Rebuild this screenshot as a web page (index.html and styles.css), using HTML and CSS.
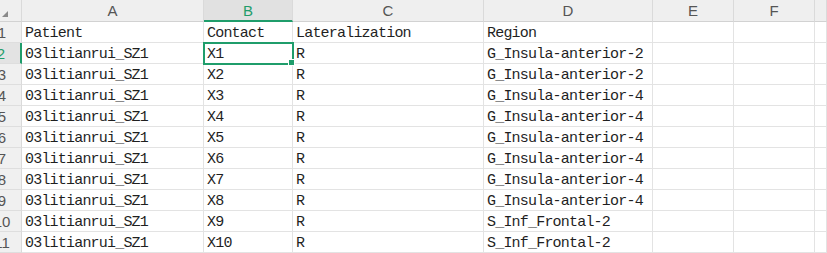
FILE: index.html
```html
<!DOCTYPE html>
<html lang="en">
<head>
  <meta charset="UTF-8">
  <title>Sheet1</title>
  <link rel="stylesheet" href="styles.css">
</head>
<body>
  <div class="sheet">
    <div class="corner"><span class="corner-mark"></span></div>
    <div class="col-head">A</div>
    <div class="col-head selected">B</div>
    <div class="col-head">C</div>
    <div class="col-head">D</div>
    <div class="col-head">E</div>
    <div class="col-head">F</div>
    <div class="col-head"></div>

    <div class="row-head"><span>1</span></div>
    <div class="cell">Patient</div><div class="cell">Contact</div><div class="cell">Lateralization</div><div class="cell">Region</div><div class="cell"></div><div class="cell"></div><div class="cell"></div>

    <div class="row-head selected"><span>2</span></div>
    <div class="cell">03litianrui_SZ1</div><div class="cell active">X1<span class="handle"></span></div><div class="cell">R</div><div class="cell">G_Insula-anterior-2</div><div class="cell"></div><div class="cell"></div><div class="cell"></div>

    <div class="row-head"><span>3</span></div>
    <div class="cell">03litianrui_SZ1</div><div class="cell">X2</div><div class="cell">R</div><div class="cell">G_Insula-anterior-2</div><div class="cell"></div><div class="cell"></div><div class="cell"></div>

    <div class="row-head"><span>4</span></div>
    <div class="cell">03litianrui_SZ1</div><div class="cell">X3</div><div class="cell">R</div><div class="cell">G_Insula-anterior-4</div><div class="cell"></div><div class="cell"></div><div class="cell"></div>

    <div class="row-head"><span>5</span></div>
    <div class="cell">03litianrui_SZ1</div><div class="cell">X4</div><div class="cell">R</div><div class="cell">G_Insula-anterior-4</div><div class="cell"></div><div class="cell"></div><div class="cell"></div>

    <div class="row-head"><span>6</span></div>
    <div class="cell">03litianrui_SZ1</div><div class="cell">X5</div><div class="cell">R</div><div class="cell">G_Insula-anterior-4</div><div class="cell"></div><div class="cell"></div><div class="cell"></div>

    <div class="row-head"><span>7</span></div>
    <div class="cell">03litianrui_SZ1</div><div class="cell">X6</div><div class="cell">R</div><div class="cell">G_Insula-anterior-4</div><div class="cell"></div><div class="cell"></div><div class="cell"></div>

    <div class="row-head"><span>8</span></div>
    <div class="cell">03litianrui_SZ1</div><div class="cell">X7</div><div class="cell">R</div><div class="cell">G_Insula-anterior-4</div><div class="cell"></div><div class="cell"></div><div class="cell"></div>

    <div class="row-head"><span>9</span></div>
    <div class="cell">03litianrui_SZ1</div><div class="cell">X8</div><div class="cell">R</div><div class="cell">G_Insula-anterior-4</div><div class="cell"></div><div class="cell"></div><div class="cell"></div>

    <div class="row-head"><span>10</span></div>
    <div class="cell">03litianrui_SZ1</div><div class="cell">X9</div><div class="cell">R</div><div class="cell">S_Inf_Frontal-2</div><div class="cell"></div><div class="cell"></div><div class="cell"></div>

    <div class="row-head"><span>11</span></div>
    <div class="cell">03litianrui_SZ1</div><div class="cell">X10</div><div class="cell">R</div><div class="cell">S_Inf_Frontal-2</div><div class="cell"></div><div class="cell"></div><div class="cell"></div>
  </div>
</body>
</html>
```

FILE: styles.css
```css
body {
  margin: 0;
  background-color: #ffffff;
  overflow: hidden;
}

.sheet {
  display: grid;
  grid-template-columns: 22px 182px 89px 191px 169px 81px 81px 1fr;
  grid-template-rows: 22px;
  grid-auto-rows: 21px;
  font-family: "Liberation Mono", "DejaVu Sans Mono", monospace;
  font-size: 15px;
  letter-spacing: -0.8px;
  color: #1f1f1f;
}

.corner {
  background-color: #efefef;
  border-right: 1px solid #dadada;
  border-bottom: 1px solid #d2d2d2;
  position: relative;
}

.corner-mark {
  position: absolute;
  left: 2px;
  bottom: 4px;
  width: 0;
  height: 0;
  border-left: 6px solid transparent;
  border-bottom: 6px solid #8a8a8a;
}

.col-head {
  box-sizing: border-box;
  display: flex;
  align-items: center;
  justify-content: center;
  background-color: #efefef;
  border-right: 1px solid #dadada;
  border-bottom: 1px solid #d2d2d2;
  font-family: "Liberation Sans", Arial, sans-serif;
  font-size: 15px;
  letter-spacing: 0;
  color: #555555;
}

.col-head.selected {
  background-color: #e1e1e1;
  border-bottom: 2px solid #1f9d6b;
  color: #1f9d6b;
}

.row-head {
  box-sizing: border-box;
  display: flex;
  justify-content: flex-end;
  align-items: center;
  overflow: hidden;
  background-color: #f0f0f0;
  border-right: 1px solid #dadada;
  border-bottom: 1px solid #dedede;
  font-family: "Liberation Sans", Arial, sans-serif;
  font-size: 15px;
  letter-spacing: 0;
  color: #555555;
}

.row-head span {
  flex-shrink: 0;
  width: 38px;
  text-align: center;
}

.row-head.selected {
  background-color: #e3e3e3;
  border-right: 2px solid #1f9d6b;
  color: #1f9d6b;
}

.cell {
  box-sizing: border-box;
  padding: 2px 3px 0;
  line-height: 19px;
  white-space: nowrap;
  border-right: 1px solid #e3e3e3;
  border-bottom: 1px solid #e3e3e3;
}

.cell.active {
  position: relative;
  outline: 2px solid #1f9d6b;
  outline-offset: -1px;
}

.handle {
  position: absolute;
  right: -3px;
  bottom: -3px;
  width: 5px;
  height: 5px;
  background-color: #1f9d6b;
  border: 1px solid #ffffff;
}
```
